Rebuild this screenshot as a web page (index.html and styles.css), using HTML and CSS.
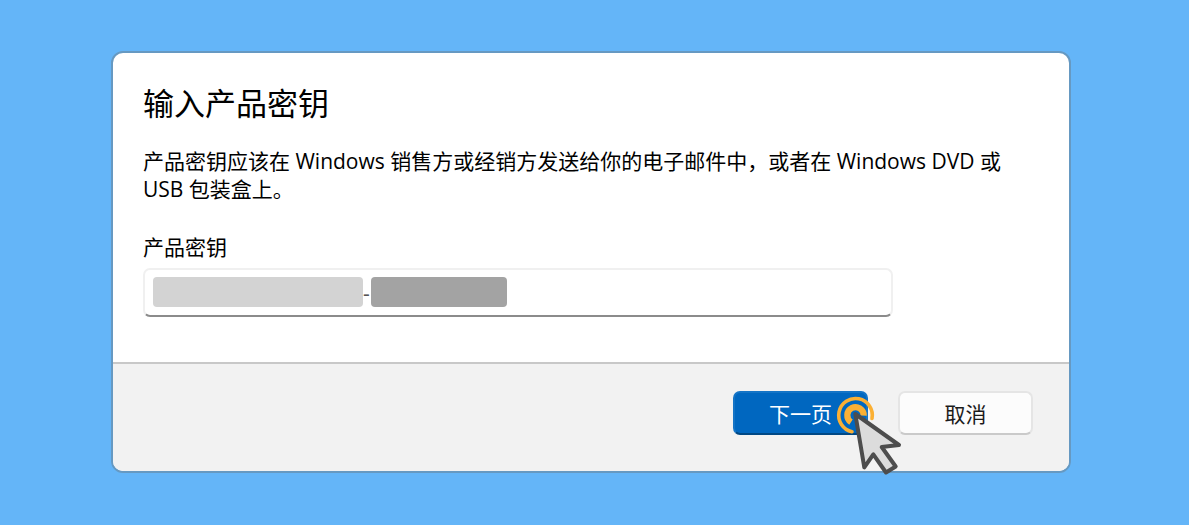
FILE: index.html
```html
<!DOCTYPE html>
<html lang="zh-CN">
    <head>
        <meta charset="UTF-8" />
        <meta name="viewport" content="width=device-width, initial-scale=1.0" />
        <title>输入产品密钥</title>
        <link rel="stylesheet" href="styles.css">
    </head>
    <body>
        <main class="dialog">
            <form>
                <div class="content">
                    <h1>输入产品密钥</h1>
                    <p>
                        产品密钥应该在 Windows 销售方或经销方发送给你的电子邮件中，或者在 Windows DVD 或 USB 包装盒上。
                    </p>
                    <label for="product-key">产品密钥</label>
                    <div class="key-field">
                        <input id="product-key" type="text" value="-" />
                        <span class="mask mask-light"></span>
                        <span class="mask mask-dark"></span>
                    </div>
                </div>
                <div class="actions">
                    <div class="next">
                        <button class="primary" type="button">下一页</button>
                        <svg class="pointer" width="70" height="84" viewBox="0 0 70 84" aria-hidden="true">
                            <g fill="none" stroke="#fbb034" stroke-linecap="round">
                                <path stroke-width="3.6" d="M17 38.7A16.8 16.8 0 1 1 37 25.5" />
                                <path stroke-width="6.2" stroke-linecap="butt" d="M16 29.2A8.2 8.2 0 1 1 28.7 22.6" />
                            </g>
                            <path fill="#dcdcdc" stroke="#4d4d4d" stroke-width="4" stroke-linejoin="round" d="M20.3 21L64 52 46.7 54 60.7 73.5 51 79.5 38.3 61.3 29.3 74.3Z" />
                        </svg>
                    </div>
                    <button type="button">取消</button>
                </div>
            </form>
        </main>
    </body>
</html>
```
FILE: styles.css
```css
* {
    box-sizing: border-box;
    margin: 0;
}

body {
    padding: 51px 118px 52px 111px;
    background-color: #64b5f8;
    color: #000;
    font-family: 'Open Sans', 'Noto Sans CJK SC', sans-serif;
    font-size: 21px;
    line-height: 28px;
}

.dialog {
    max-width: 960px;
    border: 2px solid #6699c2;
    border-radius: 12px;
    background-color: #fff;
}

.content {
    padding: 30px 30px 45px;
}

h1 {
    margin-bottom: 24px;
    font-size: 31px;
    font-weight: 400;
    line-height: 40px;
}

p {
    margin-bottom: 30px;
}

label {
    display: block;
    margin-bottom: 7px;
}

.key-field {
    position: relative;
    max-width: 750px;
}

input {
    display: block;
    width: 100%;
    height: 49px;
    padding: 0 8px 0 218px;
    border: 2px solid #f0f0f0;
    border-bottom-color: #8b8b8b;
    border-radius: 7px;
    background-color: #fff;
    color: #555;
    font: inherit;
}

.mask {
    position: absolute;
    top: 9px;
    height: 30px;
    border-radius: 4px;
}

.mask-light {
    left: 10px;
    width: 210px;
    background-color: #d3d3d3;
}

.mask-dark {
    left: 228px;
    width: 136px;
    background-color: #a3a3a3;
}

.actions {
    display: flex;
    justify-content: flex-end;
    gap: 30px;
    padding: 27px 36px 36px;
    border-top: 2px solid #c8c8c8;
    border-radius: 0 0 10px 10px;
    background-color: #f2f2f2;
}

.next {
    position: relative;
}

button {
    display: block;
    width: 135px;
    height: 44px;
    padding: 2px 0 0;
    border: 2px solid #e5e5e5;
    border-bottom-color: #cacaca;
    border-radius: 7px;
    background-color: #fcfcfc;
    color: #1b1b1b;
    font: inherit;
}

.primary {
    border-color: #1474c6;
    border-bottom-color: #004884;
    background-color: #0067c0;
    color: #fff;
}

.pointer {
    position: absolute;
    top: 2px;
    left: 102px;
    pointer-events: none;
}
```
